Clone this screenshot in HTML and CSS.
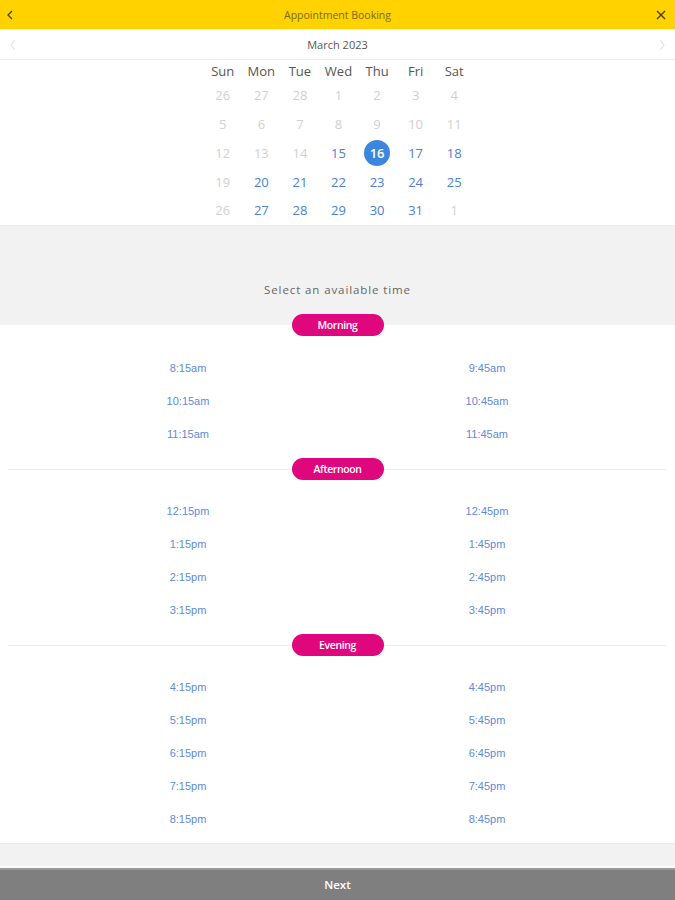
FILE: index.html
```html
<!DOCTYPE html>
<html>
<head>
<meta charset="utf-8">
<link rel="stylesheet" href="styles.css">
</head>
<body>
<div class="app">
  <header class="topbar">
    <span class="icon-btn left"><svg width="8" height="10" viewBox="0 0 8 10"><path d="M6 1 L2 5 L6 9" fill="none" stroke="#4a4000" stroke-width="1.3"/></svg></span>
    <span class="title">Appointment Booking</span>
    <span class="icon-btn right"><svg width="10" height="10" viewBox="0 0 10 10"><path d="M1 1 L9 9 M9 1 L1 9" fill="none" stroke="#4a4000" stroke-width="1.4"/></svg></span>
  </header>
  <div class="monthbar">
    <span class="icon-btn left"><svg width="8" height="12" viewBox="0 0 8 12"><path d="M6 1 L2 6 L6 11" fill="none" stroke="#e2e2e2" stroke-width="1.2"/></svg></span>
    <span class="month">March 2023</span>
    <span class="icon-btn right"><svg width="8" height="12" viewBox="0 0 8 12"><path d="M2 1 L6 6 L2 11" fill="none" stroke="#e2e2e2" stroke-width="1.2"/></svg></span>
  </div>
  <div class="calendar">
    <div class="cal-grid">
      <div class="dow">Sun</div><div class="dow">Mon</div><div class="dow">Tue</div><div class="dow">Wed</div><div class="dow">Thu</div><div class="dow">Fri</div><div class="dow">Sat</div>
      <div class="day off">26</div><div class="day off">27</div><div class="day off">28</div><div class="day off">1</div><div class="day off">2</div><div class="day off">3</div><div class="day off">4</div>
      <div class="day off">5</div><div class="day off">6</div><div class="day off">7</div><div class="day off">8</div><div class="day off">9</div><div class="day off">10</div><div class="day off">11</div>
      <div class="day off">12</div><div class="day off">13</div><div class="day off">14</div><div class="day on">15</div><div class="day sel"><span>16</span></div><div class="day on">17</div><div class="day on">18</div>
      <div class="day off">19</div><div class="day on">20</div><div class="day on">21</div><div class="day on">22</div><div class="day on">23</div><div class="day on">24</div><div class="day on">25</div>
      <div class="day off">26</div><div class="day on">27</div><div class="day on">28</div><div class="day on">29</div><div class="day on">30</div><div class="day on">31</div><div class="day off">1</div>
    </div>
  </div>
  <div class="prompt">Select an available time</div>
  <div class="group-head first"><span class="pill">Morning</span></div>
  <div class="slots first">
    <div class="slot">8:15am</div><div class="slot">9:45am</div>
    <div class="slot">10:15am</div><div class="slot">10:45am</div>
    <div class="slot">11:15am</div><div class="slot">11:45am</div>
  </div>
  <div class="group-head"><span class="pill">Afternoon</span></div>
  <div class="slots">
    <div class="slot">12:15pm</div><div class="slot">12:45pm</div>
    <div class="slot">1:15pm</div><div class="slot">1:45pm</div>
    <div class="slot">2:15pm</div><div class="slot">2:45pm</div>
    <div class="slot">3:15pm</div><div class="slot">3:45pm</div>
  </div>
  <div class="group-head"><span class="pill">Evening</span></div>
  <div class="slots">
    <div class="slot">4:15pm</div><div class="slot">4:45pm</div>
    <div class="slot">5:15pm</div><div class="slot">5:45pm</div>
    <div class="slot">6:15pm</div><div class="slot">6:45pm</div>
    <div class="slot">7:15pm</div><div class="slot">7:45pm</div>
    <div class="slot">8:15pm</div><div class="slot">8:45pm</div>
  </div>
  <div class="spacer"></div>
  <div class="next">Next</div>
</div>
</body>
</html>
```
FILE: styles.css
```css
* { box-sizing: border-box; }
html, body { margin: 0; padding: 0; }
body { background: #fff; font-family: "Open Sans", "Liberation Sans", sans-serif; }
.app { width: 675px; height: 900px; display: flex; flex-direction: column; overflow: hidden; }

.topbar {
  height: 29px; background: #ffd200; display: flex; align-items: center;
  justify-content: center; position: relative; flex: none;
}
.title { font-family: "Open Sans", sans-serif; font-size: 10.5px; color: #7a6a1e; }
.icon-btn { position: absolute; top: 0; bottom: 0; display: flex; align-items: center; }
.topbar .left { left: 6px; }
.topbar .right { right: 9px; }

.monthbar {
  height: 31px; border-top: 1px solid #fff3b0; border-bottom: 1px solid #ececec;
  display: flex; align-items: center; justify-content: center; position: relative; flex: none;
}
.month { font-size: 11px; color: #555; }
.monthbar .left { left: 9px; }
.monthbar .right { right: 9px; }

.calendar { height: 165px; flex: none; display: flex; justify-content: center; padding-top: 1px; }
.cal-grid {
  width: 270px; display: grid; grid-template-columns: repeat(7, 1fr);
  grid-template-rows: 20px repeat(5, 28.75px); margin-left: 2px;
}
.dow { font-size: 13px; color: #555; display: flex; align-items: center; justify-content: center; }
.day { font-size: 13px; display: flex; align-items: center; justify-content: center; }
.day.off { color: #d0d0d0; }
.day.on { color: #4a80d6; }
.day.sel span {
  width: 26px; height: 26px; border-radius: 50%; background: #3d86dd; color: #fff;
  display: flex; align-items: center; justify-content: center; font-weight: 600;
}

.prompt {
  height: 89px; flex: none; background: #f2f2f2; border-top: 1px solid #ebebeb;
  display: flex; align-items: flex-end; justify-content: center; padding-bottom: 17px;
  font-size: 11.5px; letter-spacing: 0.9px; color: #666;
}

.group-head {
  height: 22px; flex: none; display: flex; justify-content: center; align-items: center;
  background: linear-gradient(#ededed, #ededed) center / 659px 1px no-repeat;
}
.group-head.first { background: linear-gradient(#f2f2f2 50%, #fff 50%); }
.pill {
  width: 92px; height: 22px; border-radius: 11px; background: #e0077e; color: #fff;
  font-family: "Open Sans", sans-serif; font-weight: 600; font-size: 10.5px; letter-spacing: -0.4px;
  display: flex; align-items: center; justify-content: center;
}

.slots {
  width: 598px; margin: 0 auto; flex: none; padding: 14px 0 8px;
  display: grid; grid-template-columns: 1fr 1fr; grid-auto-rows: 33px;
}
.slots.first { padding-top: 15px; }
.slot {
  font-family: "Liberation Sans", Arial, sans-serif; font-size: 11px; color: #6189dc;
  display: flex; align-items: center; justify-content: center;
}

.spacer { flex: 1; background: #f2f2f2; border-top: 1px solid #ececec; border-bottom: 2px solid #fafafa; }
.next {
  height: 32px; flex: none; background: #7f7f7f; box-shadow: inset 0 2px 0 #999;
  color: #fff; font-size: 11.5px; font-weight: 600; display: flex; align-items: center; justify-content: center;
}
```
